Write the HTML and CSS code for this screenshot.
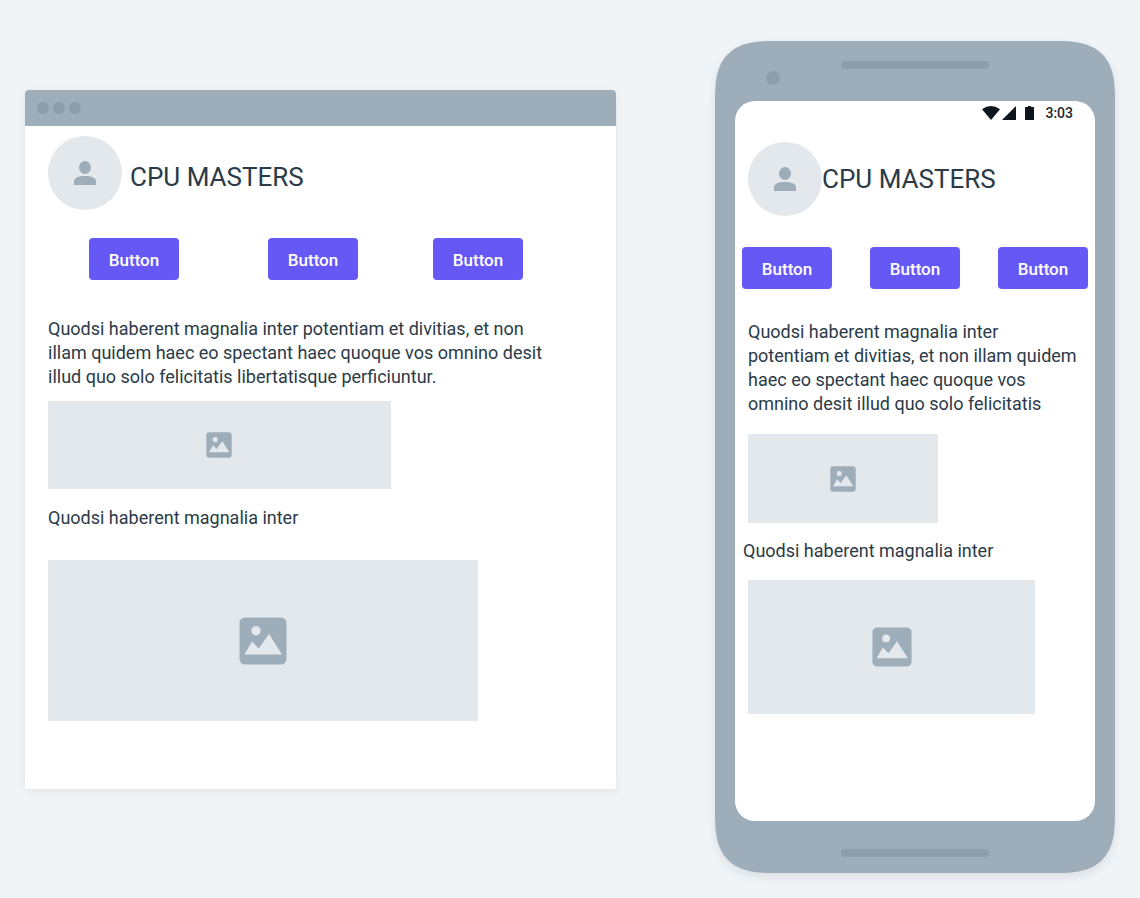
FILE: index.html
```html
<!DOCTYPE html>
<html lang="en">
<head>
<meta charset="utf-8">
<meta name="viewport" content="width=device-width, initial-scale=1">
<title>CPU MASTERS</title>
<link rel="stylesheet" href="styles.css">
</head>
<body>
<svg class="sprite" aria-hidden="true">
  <symbol id="person" viewBox="0 0 22 24">
    <ellipse cx="11" cy="6.5" rx="6" ry="6.5"/>
    <path d="M0 24V20.500C0 16.500 5 15 11 15s11 1.500 11 5.500V24z"/>
  </symbol>
  <symbol id="picture" viewBox="0 0 48 48">
    <path fill-rule="evenodd" d="M6 .5h36A5.500 5.500 0 0 1 47.500 6v36a5.500 5.500 0 0 1-5.500 5.500H6A5.500 5.500 0 0 1 .5 42V6A5.500 5.500 0 0 1 6 .5zM17 9a4.700 4.700 0 1 0 0 9.400A4.700 4.700 0 0 0 17 9zM5.500 37.500h37.500L30 17 19.800 31.600 13 24.500z"/>
  </symbol>
</svg>
<main class="page">
  <section class="browser" aria-label="Desktop">
    <div class="titlebar"><i class="dot"></i><i class="dot"></i><i class="dot"></i></div>
    <div class="browser-body">
      <header class="brand">
        <span class="avatar"><svg class="person"><use href="#person"/></svg></span>
        <h1 class="brand-name">CPU MASTERS</h1>
      </header>
      <div class="actions">
        <button class="button" type="button">Button</button>
        <button class="button" type="button">Button</button>
        <button class="button" type="button">Button</button>
      </div>
      <p class="copy">Quodsi haberent magnalia inter potentiam et divitias, et non illam quidem haec eo spectant haec quoque vos omnino desit illud quo solo felicitatis libertatisque perficiuntur.</p>
      <div class="image image-small"><svg class="picture"><use href="#picture"/></svg></div>
      <p class="caption">Quodsi haberent magnalia inter</p>
      <div class="image image-large"><svg class="picture"><use href="#picture"/></svg></div>
    </div>
  </section>

  <section class="phone" aria-label="Mobile">
    <div class="phone-top"><i class="camera"></i><i class="speaker"></i></div>
    <div class="screen">
      <div class="status">
        <svg class="status-icons" viewBox="0 0 52 14" aria-hidden="true">
          <path d="M0 3.200Q9-3.200 18 3.200L9 14z"/>
          <path d="M34 0v14H20z"/>
          <path d="M43 1h3V0h3v1h3v13h-9z"/>
        </svg>
        <time>3:03</time>
      </div>
      <header class="brand">
        <span class="avatar"><svg class="person"><use href="#person"/></svg></span>
        <h2 class="brand-name">CPU MASTERS</h2>
      </header>
      <div class="actions">
        <button class="button" type="button">Button</button>
        <button class="button" type="button">Button</button>
        <button class="button" type="button">Button</button>
      </div>
      <p class="copy">Quodsi haberent magnalia inter<br>potentiam et divitias, et non illam quidem haec eo spectant haec quoque vos omnino desit illud quo solo felicitatis</p>
      <div class="image image-small"><svg class="picture"><use href="#picture"/></svg></div>
      <p class="caption">Quodsi haberent magnalia inter</p>
      <div class="image image-large"><svg class="picture"><use href="#picture"/></svg></div>
    </div>
    <div class="phone-bottom"><i class="speaker"></i></div>
  </section>
</main>
</body>
</html>
```
FILE: styles.css
```css
* { box-sizing: border-box; }

body {
  margin: 0;
  background: #f0f4f7;
  color: #2b3a47;
  font-family: Roboto, "Liberation Sans", sans-serif;
  font-size: 18px;
  line-height: 24px;
}

h1, h2, p { margin: 0; }

.sprite { display: none; }

.page {
  display: grid;
  grid-template-columns: minmax(0, 591fr) minmax(0, 400fr);
  gap: 99px;
  align-items: start;
  padding: 41px 25px 25px;
}

.browser {
  margin-top: 49px;
  background: #fff;
  border-radius: 4px 4px 0 0;
  box-shadow: 0 2px 8px rgba(40, 50, 60, 0.08);
}

.titlebar {
  display: flex;
  align-items: center;
  gap: 4px;
  height: 36px;
  padding: 0 12px;
  background: #9eadba;
  border-radius: 4px 4px 0 0;
}

.dot {
  width: 12px;
  height: 12px;
  border-radius: 50%;
  background: #8e9dac;
}

.browser-body { padding: 10px 0 68px; }

.brand {
  display: flex;
  align-items: center;
  padding-left: 23px;
}

.avatar {
  display: flex;
  flex: none;
  align-items: center;
  justify-content: center;
  width: 74px;
  height: 74px;
  border-radius: 50%;
  background: #e3e8ec;
}

.person {
  width: 22px;
  height: 24px;
  fill: #9eadba;
}

.brand-name {
  padding: 8px 0 0 8px;
  font-size: 26px;
  font-weight: 400;
  line-height: 32px;
}

.actions {
  display: grid;
  grid-template-columns: 179fr 165fr 183fr;
  padding: 28px 0 0 64px;
}

.button {
  width: 90px;
  height: 42px;
  padding: 2px 0 0;
  border: 0;
  border-radius: 4px;
  background: #6658f5;
  color: #fff;
  font: 500 17px/24px Roboto, "Liberation Sans", sans-serif;
}

.copy {
  max-width: 530px;
  padding: 37px 0 0 23px;
}

.image {
  display: flex;
  align-items: center;
  justify-content: center;
  margin-left: 23px;
  background: #e3e8ec;
}

.picture { fill: #9eadba; }

.image-small {
  width: 58%;
  height: 88px;
  margin-top: 12px;
}

.image-small .picture {
  width: 26px;
  height: 26px;
}

.caption { padding: 17px 0 0 23px; }

.image-large {
  width: 73%;
  max-width: 430px;
  height: 161px;
  margin-top: 30px;
}

.image-large .picture {
  width: 48px;
  height: 48px;
}

.phone {
  padding: 0 20px;
  background: #9eadba;
  border-radius: 46px;
  box-shadow: 0 4px 10px rgba(40, 50, 60, 0.1);
}

@supports (corner-shape: superellipse(1.5)) {
  .phone {
    border-radius: 60px;
    corner-shape: superellipse(1.5);
  }
}

.phone-top {
  position: relative;
  height: 60px;
  padding-top: 20px;
}

.speaker {
  display: block;
  width: 148px;
  height: 8px;
  margin: 0 auto;
  border-radius: 4px;
  background: #8e9dac;
}

.camera {
  position: absolute;
  left: 31px;
  top: 30px;
  width: 14px;
  height: 14px;
  border-radius: 50%;
  background: #8e9dac;
}

.screen {
  padding-bottom: 107px;
  background: #fff;
  border-radius: 20px;
}

.status {
  display: flex;
  align-items: center;
  justify-content: flex-end;
  gap: 11px;
  height: 24px;
  padding-right: 22px;
  color: #1c272f;
  font-size: 14px;
  font-weight: 500;
}

.status-icons {
  width: 52px;
  height: 14px;
  fill: #0d161d;
}

.phone .brand {
  padding: 17px 0 0 13px;
}

.phone .brand-name { padding: 0; }

.phone .actions {
  display: flex;
  justify-content: space-between;
  padding: 31px 7px 0;
}

.phone .copy {
  max-width: 350px;
  padding: 31px 0 0 13px;
}

.phone .image { margin-left: 13px; }

.phone .image-small {
  width: 53%;
  max-width: 190px;
  height: 89px;
  margin-top: 18px;
}

.phone .caption { padding: 16px 0 0 8px; }

.phone .image-large {
  width: 80%;
  max-width: 287px;
  height: 134px;
  margin-top: 17px;
}

.phone .image-large .picture {
  width: 40px;
  height: 40px;
}

.phone-bottom {
  height: 52px;
  padding-top: 28px;
}
```
